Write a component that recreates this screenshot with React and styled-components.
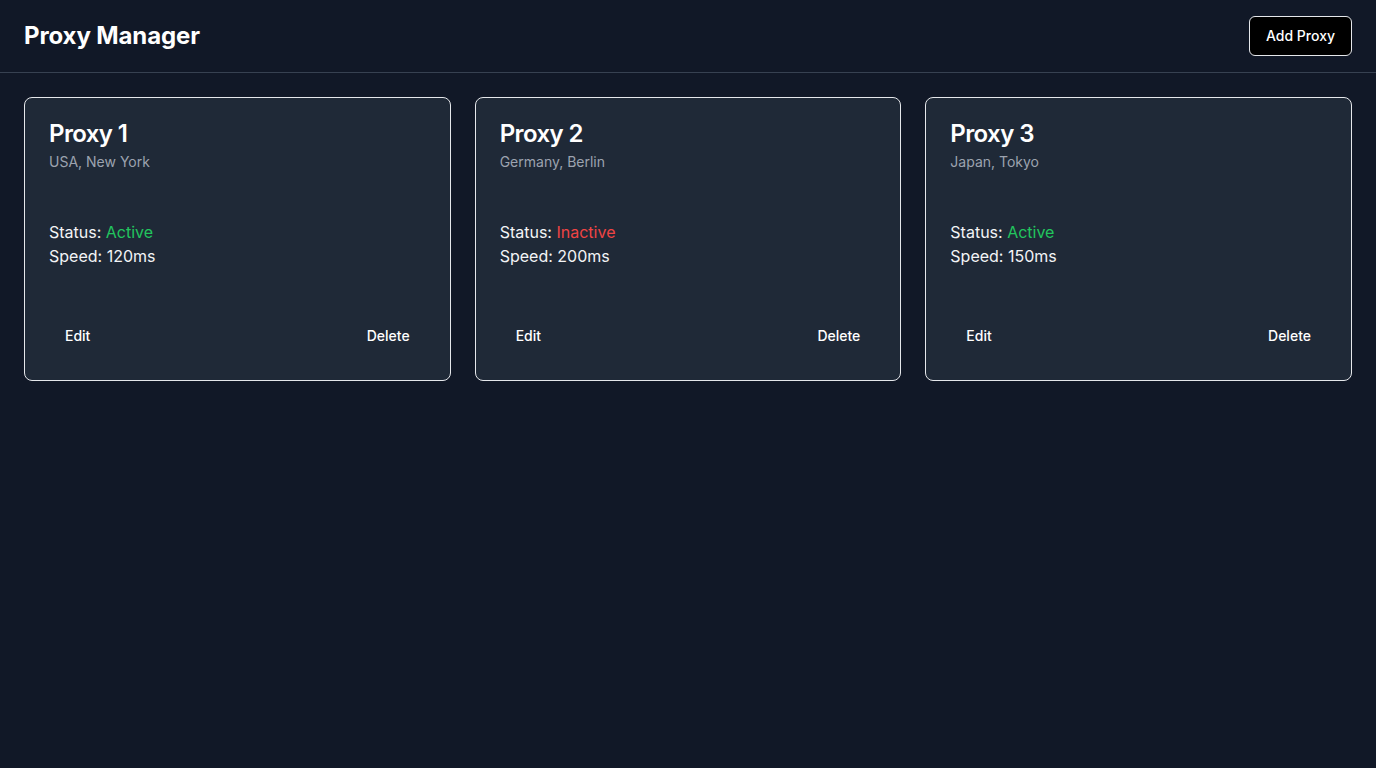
import React from "react";
import styled, { createGlobalStyle } from "styled-components";

const GlobalStyle = createGlobalStyle`
  * { box-sizing: border-box; }
  html, body {
    margin: 0;
    background: #111827;
    color: #ffffff;
    font-family: Inter, "Noto Sans", sans-serif;
  }
`;

const Page = styled.div`
  min-height: 100vh;
  background: #111827;
`;

const Header = styled.header`
  display: flex;
  align-items: center;
  justify-content: space-between;
  height: 73px;
  padding: 0 24px;
  border-bottom: 1px solid #374151;
`;

const Title = styled.h1`
  margin: 0;
  font-size: 24px;
  line-height: 32px;
  font-weight: 700;
  letter-spacing: -0.005em;
  color: #ffffff;
`;

const AddButton = styled.button`
  height: 40px;
  padding: 0 16px 2px;
  background: #000000;
  color: #ffffff;
  border: 1px solid #e5e7eb;
  border-radius: 6px;
  font-family: inherit;
  font-size: 14px;
  font-weight: 500;
  cursor: pointer;
`;

const Grid = styled.main`
  display: grid;
  grid-template-columns: repeat(3, 1fr);
  gap: 24px;
  padding: 24px;
`;

const Card = styled.div`
  background: #1f2937;
  border: 1px solid #e5e7eb;
  border-radius: 8px;
  display: flex;
  flex-direction: column;
`;

const CardHeader = styled.div`
  padding: 24px;
  display: flex;
  flex-direction: column;
  gap: 6px;
`;

const CardTitle = styled.h3`
  margin: 0;
  font-size: 24px;
  line-height: 24px;
  font-weight: 600;
  letter-spacing: -0.025em;
  color: #ffffff;
`;

const CardDesc = styled.p`
  margin: 0;
  font-size: 14px;
  line-height: 20px;
  color: #9ca3af;
`;

const CardContent = styled.div`
  padding: 24px;
  font-size: 16px;
  line-height: 24px;
  color: #f3f4f6;
`;

const Line = styled.p`
  margin: 0;
`;

const StatusText = styled.span`
  color: ${({ active }) => (active ? "#22c55e" : "#ef4444")};
`;

const CardFooter = styled.div`
  padding: 24px;
  display: flex;
  justify-content: space-between;
  align-items: center;
`;

const GhostButton = styled.button`
  height: 40px;
  padding: 0 16px 2px;
  background: transparent;
  color: #ffffff;
  border: none;
  border-radius: 6px;
  font-family: inherit;
  font-size: 14px;
  font-weight: 500;
  cursor: pointer;
`;

const proxies = [
  { name: "Proxy 1", location: "USA, New York", active: true, speed: 120 },
  { name: "Proxy 2", location: "Germany, Berlin", active: false, speed: 200 },
  { name: "Proxy 3", location: "Japan, Tokyo", active: true, speed: 150 },
];

export default function App() {
  return (
    <Page>
      <GlobalStyle />
      <Header>
        <Title>Proxy Manager</Title>
        <AddButton>Add Proxy</AddButton>
      </Header>
      <Grid>
        {proxies.map((p) => (
          <Card key={p.name}>
            <CardHeader>
              <CardTitle>{p.name}</CardTitle>
              <CardDesc>{p.location}</CardDesc>
            </CardHeader>
            <CardContent>
              <Line>
                Status: <StatusText active={p.active}>{p.active ? "Active" : "Inactive"}</StatusText>
              </Line>
              <Line>Speed: {p.speed}ms</Line>
            </CardContent>
            <CardFooter>
              <GhostButton>Edit</GhostButton>
              <GhostButton>Delete</GhostButton>
            </CardFooter>
          </Card>
        ))}
      </Grid>
    </Page>
  );
}
